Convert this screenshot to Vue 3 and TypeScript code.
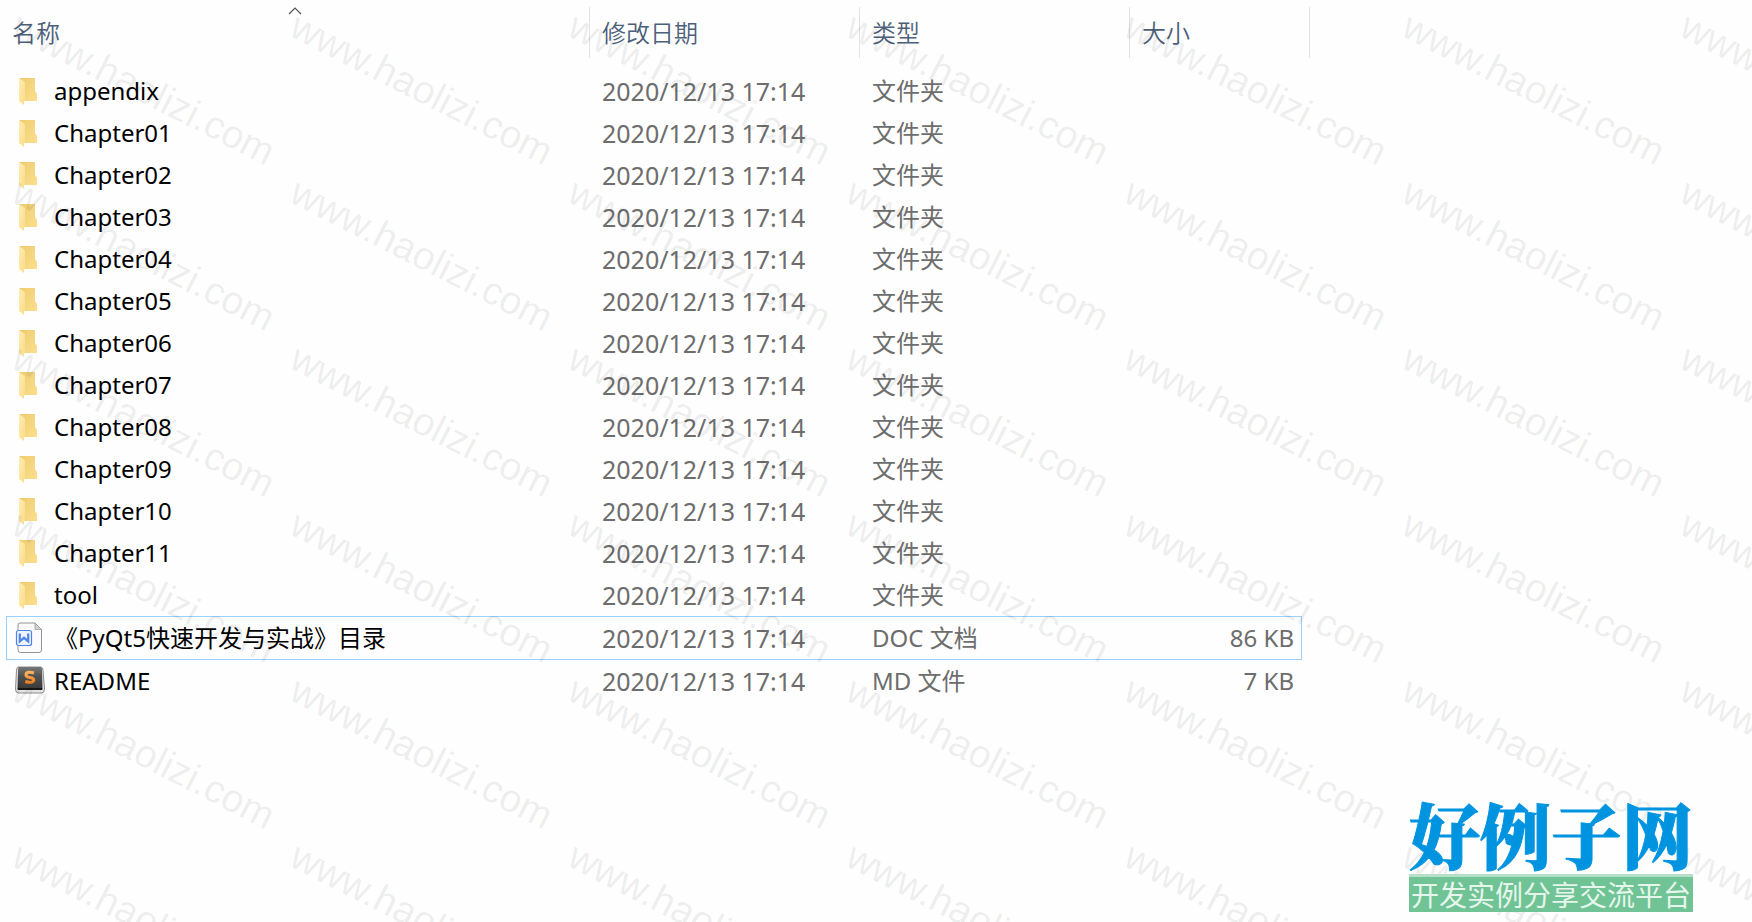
<script setup lang="ts">
type Kind = 'folder' | 'doc' | 'sublime'

interface Entry {
  name: string
  date: string
  type: string
  size: string
  kind: Kind
  focused?: boolean
}

const date = '2020/12/13 17:14'

const folderNames: string[] = [
  'appendix',
  ...Array.from({ length: 11 }, (_, i) => 'Chapter' + String(i + 1).padStart(2, '0')),
  'tool',
]

const entries: Entry[] = [
  ...folderNames.map((name): Entry => ({ name, date, type: '文件夹', size: '', kind: 'folder' })),
  { name: '《PyQt5快速开发与实战》目录', date, type: 'DOC 文档', size: '86 KB', kind: 'doc', focused: true },
  { name: 'README', date, type: 'MD 文件', size: '7 KB', kind: 'sublime' },
]

const watermarkCount = 7 * 6
</script>

<template>
  <main class="page">
    <table class="files">
      <colgroup>
        <col class="col-name" />
        <col class="col-date" />
        <col class="col-type" />
        <col class="col-size" />
      </colgroup>
      <thead>
        <tr>
          <th scope="col" aria-sort="ascending">
            <button type="button">名称</button>
            <svg class="caret" viewBox="0 0 14 8" aria-hidden="true">
              <path d="M1 7 L7 1 L13 7" fill="none" stroke="#555" stroke-width="1.2" />
            </svg>
          </th>
          <th scope="col"><button type="button">修改日期</button></th>
          <th scope="col"><button type="button">类型</button></th>
          <th scope="col"><button type="button">大小</button></th>
        </tr>
      </thead>
      <tbody>
        <tr v-for="entry in entries" :key="entry.name" :class="{ focused: entry.focused }">
          <td>
            <div class="name">
              <svg v-if="entry.kind === 'folder'" class="icon" viewBox="0 0 32 32" aria-hidden="true">
                <defs>
                  <linearGradient id="folder-back" x1="0" x2="1" y1="0" y2="1">
                    <stop offset="0" stop-color="#eecb70" />
                    <stop offset="1" stop-color="#fcdf8c" />
                  </linearGradient>
                  <linearGradient id="folder-flap" x1="0" x2="1" y1="0" y2="1">
                    <stop offset="0" stop-color="#ffedb5" />
                    <stop offset="1" stop-color="#fbdc86" />
                  </linearGradient>
                </defs>
                <path d="M5 3 H21 V16 L23 19 V26 H9 Z" fill="url(#folder-back)" />
                <path d="M5 3 L11 7 V25 L10 26 V30 L5 26 Z" fill="url(#folder-flap)" />
              </svg>
              <svg v-else-if="entry.kind === 'doc'" class="icon" viewBox="0 0 32 32" aria-hidden="true">
                <path
                  d="M6 1 H21 L27.500 7.500 V28 Q27.500 30.500 25 30.500 H6.500 Q4 30.500 4 28 V3 Q4 1 6 1 Z"
                  fill="#fbfbfb"
                  stroke="#949494"
                />
                <path d="M21 1 V7.500 H27.500 Z" fill="#d2d2d2" stroke="#949494" stroke-width="0.700" />
                <rect x="2.500" y="8.500" width="15" height="15" rx="2" fill="#eef4ff" stroke="#4f83e8" stroke-width="1.200" />
                <path
                  d="M5.800 11.500 V19.300 L10 15.800 L14.200 19.300 V11.500"
                  fill="none"
                  stroke="#4f83e8"
                  stroke-width="2.200"
                />
              </svg>
              <svg v-else class="icon" viewBox="0 0 32 32" aria-hidden="true">
                <defs>
                  <linearGradient id="key-face" x1="0" x2="0" y1="0" y2="1">
                    <stop offset="0" stop-color="#777" />
                    <stop offset="0.450" stop-color="#505050" />
                    <stop offset="1" stop-color="#3c3c3c" />
                  </linearGradient>
                  <linearGradient id="key-mark" x1="0" x2="0" y1="0" y2="1">
                    <stop offset="0" stop-color="#ffb35c" />
                    <stop offset="1" stop-color="#f07f22" />
                  </linearGradient>
                </defs>
                <path
                  d="M4 2 H27 Q28.500 2 29 5 L30.500 24 Q30.500 28 27.500 28 H4.500 Q1.500 28 1.500 24 L2.500 5 Q3 2 4 2 Z"
                  fill="#e4e4e4"
                  stroke="#8c8c8c"
                />
                <path d="M5 2 H26 Q28 2 28 5 L28.500 23 H3.500 L4 5 Q4 2 5 2 Z" fill="url(#key-face)" />
                <path d="M3.500 23 H28.500 V24 Q28.500 25 27.500 25 H4.500 Q3.500 25 3.500 24 Z" fill="#151515" />
                <path
                  d="M20 8 Q12.500 5.800 12 9.700 Q11.800 12 15.700 12.600 Q20 13.200 19.700 15.400 Q18.800 18.600 11.300 16.500"
                  fill="none"
                  stroke="url(#key-mark)"
                  stroke-width="3"
                />
              </svg>
              <span>{{ entry.name }}</span>
            </div>
          </td>
          <td class="date">{{ entry.date }}</td>
          <td>{{ entry.type }}</td>
          <td class="size">{{ entry.size }}</td>
        </tr>
      </tbody>
    </table>

    <div class="watermarks" aria-hidden="true">
      <div v-for="n in watermarkCount" :key="n" class="cell">
        <span class="mark">www.haolizi.com</span>
      </div>
    </div>

    <aside class="brand">
      <strong>好例子网</strong>
      <span>开发实例分享交流平台</span>
    </aside>
  </main>
</template>

<style>
body {
  margin: 0;
  background: #fefefe;
}
</style>

<style scoped>
.page {
  position: relative;
  box-sizing: border-box;
  min-height: 100vh;
  padding: 7px 6px 0;
  overflow: hidden;
  font: 24px/40px "Noto Sans", "Noto Sans CJK SC", sans-serif;
  color: #6d6d6d;
}

.files {
  width: 1296px;
  table-layout: fixed;
  border-collapse: separate;
  border-spacing: 0;
}

.col-name {
  width: 584px;
}

.col-date,
.col-type {
  width: 270px;
}

th {
  position: relative;
  height: 63px;
  padding: 0 0 0 12px;
  text-align: left;
  vertical-align: top;
}

th:first-child {
  padding-left: 6px;
}

th::after {
  content: "";
  position: absolute;
  top: 0;
  right: 0;
  width: 1px;
  height: 51px;
  background: #e2e2e2;
}

th:last-child::after {
  right: -8px;
}

th button {
  height: 50px;
  padding: 0;
  border: 0;
  background: none;
  font: 24px/50px "Noto Sans CJK SC", sans-serif;
  font-weight: 350;
  color: #4c607a;
}

.caret {
  position: absolute;
  top: 0;
  left: 50%;
  width: 14px;
  height: 8px;
  margin-left: -10px;
}

td {
  height: 40px;
  padding: 0 0 0 12px;
  border: solid transparent;
  border-width: 1px 0;
  white-space: nowrap;
}

td:first-child {
  padding-left: 7px;
  border-left-width: 1px;
}

td:last-child {
  padding-right: 7px;
  border-right-width: 1px;
}

.focused td {
  height: 42px;
  border-color: #99d1ff;
}

.name {
  display: flex;
  align-items: center;
  gap: 8px;
  color: #000;
}

.icon {
  flex: none;
  width: 32px;
  height: 32px;
}

.date {
  font-size: 25px;
}

.size {
  text-align: right;
}

.watermarks {
  position: absolute;
  inset: 0;
  display: grid;
  grid-template-columns: repeat(7, 278px);
  grid-auto-rows: 166px;
  padding: 2px 0 0 9px;
  overflow: hidden;
  pointer-events: none;
}

.mark {
  display: block;
  width: max-content;
  font: 39px/40px "Liberation Sans", Arial, sans-serif;
  color: rgba(0, 0, 0, 0.08);
  transform: rotate(27deg);
  transform-origin: 0 34px;
}

.brand {
  position: absolute;
  right: 59px;
  bottom: 10px;
  display: flex;
  flex-direction: column;
  font-family: "Noto Sans CJK SC", sans-serif;
  white-space: nowrap;
}

.brand strong {
  padding-bottom: 4px;
  font-family: "Noto Serif CJK SC", "Noto Sans CJK SC", serif;
  font-size: 71px;
  font-weight: 900;
  line-height: 76px;
  color: #0094e0;
  -webkit-text-stroke: 1px #0094e0;
}

.brand span {
  border-top: 3px solid #b5dfc6;
  background: rgba(100, 190, 140, 0.92);
  font-size: 28px;
  line-height: 35px;
  text-align: center;
  color: #e6f6ec;
}
</style>
